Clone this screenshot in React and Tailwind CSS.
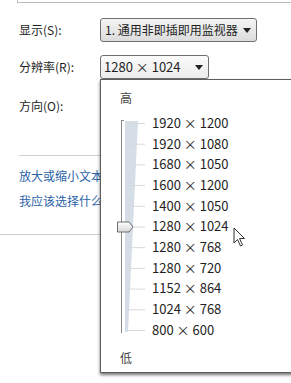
import React from 'react';

const font = { fontFamily: '"Noto Sans CJK SC", "Liberation Sans", sans-serif' };

const resolutions = [
  '1920 × 1200',
  '1920 × 1080',
  '1680 × 1050',
  '1600 × 1200',
  '1400 × 1050',
  '1280 × 1024',
  '1280 × 768',
  '1280 × 720',
  '1152 × 864',
  '1024 × 768',
  '800 × 600',
];

const Arrow = () => (
  <svg width="8" height="5" viewBox="0 0 8 5" className="shrink-0">
    <path d="M0 0 H8 L4 5 Z" fill="#222" />
  </svg>
);

// slider drawn beside the list: wedge, ticks and thumb
const Slider = () => {
  const step = 20.7;
  const top = 4;
  const ticks = resolutions.map((_, i) => top + i * step);
  const bottom = ticks[ticks.length - 1];
  return (
    <svg width="32" height="222" viewBox="0 0 32 222" className="shrink-0">
      <path d={`M9 ${top - 2} L22 ${top - 2} L12 ${bottom + 2} L9 ${bottom + 2} Z`} fill="#d5dee7" />
      <line x1="5.5" y1={top - 3} x2="5.5" y2={bottom + 3} stroke="#8a8a8a" />
      <line x1="5.5" y1={top - 2.5} x2="8" y2={top - 2.5} stroke="#8a8a8a" />
      {ticks.map((y, i) => (
        <line key={i} x1="12" y1={y + 0.5} x2="29" y2={y + 0.5} stroke="#d8d8d8" />
      ))}
      <defs>
        <linearGradient id="thumb" x1="0" y1="0" x2="0" y2="1">
          <stop offset="0" stopColor="#ffffff" />
          <stop offset="1" stopColor="#d6d6d6" />
        </linearGradient>
      </defs>
      <path
        d={`M1.5 ${ticks[5] - 4.5} H13 L17 ${ticks[5] + 0.5} L13 ${ticks[5] + 5.5} H1.5 Z`}
        fill="url(#thumb)"
        stroke="#6f6f6f"
        strokeLinejoin="round"
      />
    </svg>
  );
};

const App = () => {
  return (
    <div className="relative w-[291px] h-[383px] overflow-hidden bg-white text-[12px] text-[#1e1e1e]" style={font}>
      {/* bottom of the box above */}
      <div className="ml-[17px] h-[3px] border-l border-b border-[#bcbcbc]" />

      <div className="flex items-center mt-[15px]">
        <span className="w-[100px] pl-[19px]">显示(S):</span>
        <div className="flex items-center justify-between w-[157px] h-[24px] pl-[4px] pr-[5px] border border-[#707070] rounded-[3px] bg-gradient-to-b from-[#f4f4f4] to-[#dcdcdc] whitespace-nowrap">
          <span className="text-[12px]">1. 通用非即插即用监视器</span>
          <Arrow />
        </div>
      </div>

      <div className="flex items-center mt-[13px]">
        <span className="w-[100px] pl-[19px]">分辨率(R):</span>
        <div className="flex items-center justify-between w-[109px] h-[24px] pl-[3px] pr-[5px] border border-[#707070] rounded-[3px] bg-gradient-to-b from-[#fbfbfb] to-[#ececec] text-[13px]">
          <span>1280 × 1024</span>
          <Arrow />
        </div>
      </div>

      <div className="mt-[18px] pl-[19px]">方向(O):</div>

      <div className="ml-[19px] mt-[40px] h-px bg-[#cfcfcf]" />

      {/* links run on under the open list */}
      <div className="ml-[19px] w-[81px] overflow-hidden mt-[11px] flex flex-col gap-[7px] text-[#2a62a6] whitespace-nowrap">
        <span>放大或缩小文本和其他项目</span>
        <span>我应该选择什么显示器设置?</span>
      </div>

      <div className="mt-[24px] h-px bg-[#cfcfcf]" />

      {/* resolution dropdown list */}
      <div className="absolute left-[100px] top-[79px] w-[200px] h-[294px] border border-[#5e5e5e] bg-white shadow-[0_2px_3px_rgba(0,0,0,0.55)] text-[13px]">
        <div className="pl-[19px] pt-[9px] text-[12px] text-[#444]">高</div>
        <div className="flex mt-[12px] pl-[15px]">
          <Slider />
          <div className="flex flex-col pl-[4px] -mt-[7px]">
            {resolutions.map((r) => (
              <div key={r} className="h-[20.7px] flex items-center leading-none">{r}</div>
            ))}
          </div>
        </div>
        <div className="pl-[19px] mt-[8px] text-[12px] text-[#444]">低</div>
      </div>

      {/* mouse pointer */}
      <svg className="absolute left-[233px] top-[227px]" width="14" height="21" viewBox="0 0 14 21">
        <path d="M1 1 V16 L4.5 12.5 L7.5 19 L9.5 18 L6.5 11.5 H11.5 Z" fill="#fff" stroke="#333" strokeWidth="1" strokeLinejoin="round" />
      </svg>
    </div>
  );
};

export default App;
